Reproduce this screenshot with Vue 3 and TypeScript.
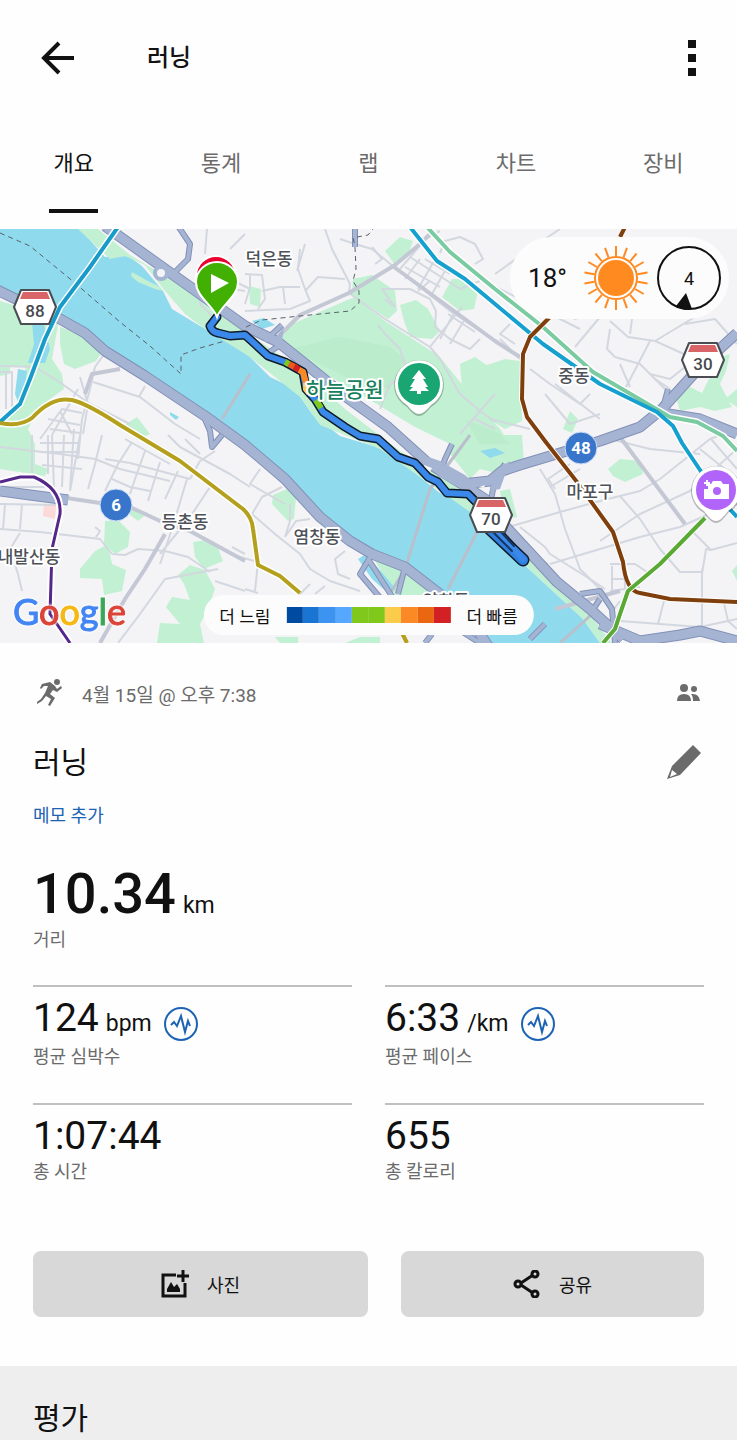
<script setup lang="ts">
import { ref } from 'vue'

interface Metric {
  value: string
  unit?: string
  label: string
  pulse?: boolean
}
interface Spot {
  x: number
  y: number
  text: string
}

const tabs: string[] = ['개요', '통계', '랩', '차트', '장비']
const activeTab = ref(0)

const metrics: Metric[] = [
  { value: '124', unit: 'bpm', label: '평균 심박수', pulse: true },
  { value: '6:33', unit: '/km', label: '평균 페이스', pulse: true },
  { value: '1:07:44', label: '총 시간' },
  { value: '655', label: '총 칼로리' },
]

const paceColors: string[] = [
  '#004b9f', '#1a75d2', '#3c94f0', '#55a7ff', '#80c91c',
  '#80c91c', '#fbcb4b', '#fb8a26', '#ea6610', '#d32024',
]

const sunRays: number[] = Array.from({ length: 18 }, (_, i) => i * 20)

/* Map geometry, in the units of the 737 x 414 map canvas */
const parks: string[] = [
  'M78 0H98L130 26L170 50L215 82L300 140L345 180L400 222L470 266L478 280L500 312L536 336L587 382L612 414H600L583 390L530 341L480 290L440 262L380 220L320 196L300 168L250 128L205 100L185 85L165 62L145 36L125 27L110 30Z',
  'M0 72L40 84L58 96L52 130L62 145L64 160L50 170L36 184L28 200L35 215V235L48 240L45 247L0 240V192L14 184L20 160L26 138H10V145L0 147Z',
  'M60 98L80 105L104 120L96 132L75 140L64 135L60 115Z',
  'M278 104L290 96L345 72L355 68L385 92L425 118L440 128L480 178L500 200L510 215H450L415 198L360 165L300 130Z',
  'M353 50L372 46L395 62L397 82L388 90L352 66Z',
  'M385 22L400 8L413 12L408 26L395 36Z',
  'M400 76L416 71L428 80L440 102L432 110L410 108L404 92Z',
  'M452 50L464 50L478 62L474 80L460 82L442 68Z',
  'M520 132L505 130L490 135L470 142L458 160L480 185L505 200L522 192Z',
  'M450 206H522L524 234L500 245L480 240L470 250L450 225Z',
  'M249 57L261 60L260 78L250 75Z',
  'M105 292L118 291L130 303L128 318L115 325L104 315Z',
  'M80 340L95 322L108 315L112 335L126 341L122 362L104 366L102 350L80 349Z',
  'M122 276L148 284L138 292L130 286Z',
  'M193 313L206 311L218 319L223 332L204 340L195 328Z',
  'M190 336L205 341L215 360L208 380L200 395L204 414H157L160 394L180 395L166 378L172 368L190 371L184 355L178 346Z',
  'M123 197L137 188L150 205L137 211Z',
  'M273 266L287 260L296 268L294 290L288 292L272 275Z',
  'M608 240L620 230L640 232L643 245L625 253L613 247Z',
  'M500 262L510 260L517 288L505 290Z',
  'M676 168L690 158L702 164L709 150L720 145L715 130L730 125L726 142L720 155L732 178L715 182L700 178L680 182Z',
  'M563 200L570 182L578 190L572 204Z',
  'M737 160L725 170L737 178Z',
  'M732 342L737 336V352Z',
  'M375 332L395 336L430 360L430 366H395Z',
  'M275 408L298 408V414H280ZM345 414L360 408L380 408V414Z',
  'M460 135L475 128L495 142L485 165L462 160Z',
]

const ponds: string[] = [
  'M32 94L44 96L50 120L45 134L28 134L34 115Z',
  'M18 140L27 142L24 165L20 178L15 165Z',
  'M252 92L264 89L275 96L262 100Z',
  'M170 183L179 188L176 191L170 186Z',
  'M480 222L495 219L505 224L490 229Z',
  'M358 330L366 325L396 360L388 364L372 350Z',
]

const minorRoads: string[] = [
  'M0 137L35 138L58 152L90 175L130 195',
  'M0 143H12V185M6 143V180',
  'M93 153L140 168L175 195L200 210',
  'M105 124L95 138L90 160L82 190L78 230M80 148L88 175L83 205',
  'M145 157L139 168M185 210L200 225',
  'M0 218L60 225L95 230L120 240L170 252',
  'M32 206V245M48 206V245M52 206L54 260M64 206L62 258M74 200L70 260M80 206L70 262',
  'M40 214H80M40 223H80M42 236L82 240M50 200L80 204M40 210L62 180L82 184M48 190L80 196',
  'M102 206L95 235L88 260M132 213L118 235L105 262M145 222L135 250L130 265',
  'M105 230L130 234L160 242L190 250M112 250L130 258L150 262M160 233L148 272M178 242L165 270M125 210L170 235',
  'M0 258H50M0 275L60 276M5 276L3 300M22 275L20 300M0 300L40 303L100 310L112 325L125 326L138 320L165 322L188 328L210 343',
  'M20 304L10 320L18 345L22 362M95 298L100 302L96 308',
  'M187 250L178 280L172 300L160 335M210 258L190 288L160 325M215 222L200 232L190 250M218 340L165 350L140 385L118 414',
  'M215 352L245 362M232 318L245 325M168 206L180 218L230 245L250 258',
  'M260 240L250 255L285 275M282 258L262 268L252 285L275 305L300 325L310 340L330 352L360 362',
  'M290 275V292L285 308M285 308L296 292L310 290M345 322L335 330L338 345L350 350M310 355L300 365M325 357L315 365M230 325L258 333L255 362M245 360L258 364',
  'M340 10L355 15L372 20L394 38M325 0L332 20L350 55L349 64M394 38L420 58L450 82L495 112',
  'M372 18L382 30L375 35M400 40L412 26L425 10L440 2',
  'M440 24L445 12L460 8L475 15L483 30L475 35M425 30L450 45M430 52L418 62M410 28L460 60L480 52',
  'M420 30L405 50M434 32L418 60M446 40L432 65M405 38L440 58',
  'M385 70L395 78L382 60L410 60L430 70L436 82L435 98M435 98L450 110L470 120L480 110M430 118L448 95L462 78M448 85L475 103M455 82L440 110M465 90L450 115',
  'M349 64L385 90L430 118L440 130L460 165L480 182L495 193M378 96L385 105L400 120L405 135L400 150L390 155L380 180',
  'M495 165L460 205M475 190L495 200',
  'M250 45V58L245 75M245 45L262 46L265 70L258 80M262 62L280 58L300 58M283 58L285 75M300 20L298 40L305 60L310 72L290 80L245 82M305 62L318 48L345 50',
  'M305 15L297 42M230 50L250 60M205 25L207 0M220 58L245 62M200 50V75L215 90',
  'M490 55L540 80L580 100M495 45L530 20L560 0M555 70L575 90L610 75L650 85',
  'M575 118L600 88M610 92L628 108L655 112L700 85M650 112L625 160M610 100L607 120L615 128L640 135L665 160M685 95L715 90L737 115M632 90L630 105',
  'M655 112L695 130L670 150L650 145M620 135L630 158M500 110L520 130M510 95L500 105L515 115M530 140L550 155L580 175L590 165M545 165L570 195L600 185M555 155L600 190M490 190L530 200',
  'M705 120L690 145M670 160L655 150',
  'M540 240L555 265L565 300L580 340L605 365M512 297L560 283L600 272L640 262L660 250L710 210L737 200',
  'M550 335L600 320L640 308L680 298L720 280L737 275M600 312L640 285L690 262L737 220',
  'M620 267L640 290L660 320L680 343H702M702 345L706 320L711 321L690 300M711 321L737 314M702 340V400M711 210L737 240M700 220L737 250',
  'M550 258L580 240M555 260L548 250L570 235M520 298L545 318L550 325L590 350L605 360M520 320L548 335M610 335H635L650 345M612 337V362M625 335V360M612 350H630M610 362L640 358',
  'M620 392L700 398L737 390M665 368L658 395M620 372L610 385M723 370L728 392L737 400M610 210L650 220L700 225',
  'M52 206L78 160M60 182L72 205M230 20L245 5',
]

const mainRoads: string[] = [
  'M0 265L60 268L100 274L130 278L160 292L190 302L245 332',
  'M165 305L145 340L125 370L100 414',
  'M349 64L395 36L420 15L430 5M349 64L300 86L278 108',
  'M394 38L495 112L520 128',
  'M620 208L685 295M555 380L620 362M120 140L92 145L85 165',
]

const bridges: string[] = [
  'M250 145L222 190',
  'M470 206L430 260L405 340L390 365',
  'M477 303L448 360',
  'M590 387L560 414',
]

const highways: string[] = [
  'M-5 60L20 72L60 90L85 104L105 122L145 147L205 187L245 216L285 250L320 288L350 312L372 325L405 338L440 365L470 390L490 420',
  'M105 -3L165 40L210 72L245 97L278 113L308 137L345 167L388 198L428 234L462 255L485 270L507 299L557 353L590 380L623 410',
  'M462 255L490 252L502 242L520 236L560 224L600 212L640 198L662 180L700 138L737 104',
  'M662 184L700 190L737 205',
  'M0 262L30 266L68 271',
  'M600 395L640 412L680 406L700 402L737 412',
]

const ramps: string[] = [
  'M178 -3L190 15L188 30L175 43',
  'M204 188L210 202L212 218L222 206M265 112L282 96M268 124L280 116',
  'M372 325L360 345L388 378M368 330L395 372M405 338L398 365',
  'M490 276L495 250L505 235M440 245L445 230L452 215',
  'M590 385L600 370M580 365L600 362L612 380L615 414M355 0L355 18',
  'M530 410L545 395M425 414L432 405M450 395L480 414M660 190L668 160',
]

const routePath =
  'M217 88L210 97Q212 103 218 104L230 107L245 106L255 115L268 127L285 133L303 143L306 160L315 170L323 183L345 198L360 207L378 210L398 228L415 234L428 248L438 253L447 264L468 265L479 276L500 305L523 330'

const placeNames: Spot[] = [
  { x: 269, y: 36, text: '덕은동' },
  { x: 574, y: 153, text: '중동' },
  { x: 590, y: 269, text: '마포구' },
  { x: 185, y: 299, text: '등촌동' },
  { x: 317, y: 314, text: '염창동' },
  { x: 29, y: 334, text: '내발산동' },
  { x: 446, y: 378, text: '양화동' },
]

const shields: Spot[] = [
  { x: 35, y: 78, text: '88' },
  { x: 703, y: 131, text: '30' },
  { x: 491, y: 286, text: '70' },
]

const routeDots: Spot[] = [
  { x: 116, y: 276, text: '6' },
  { x: 581, y: 219, text: '48' },
]

const googleLetters = [
  { ch: 'G', color: '#4285f4' },
  { ch: 'o', color: '#dc4437' },
  { ch: 'o', color: '#f4b915' },
  { ch: 'g', color: '#4285f4' },
  { ch: 'l', color: '#3aa757' },
  { ch: 'e', color: '#dc4437' },
]
</script>

<template>
  <div class="page">
    <header class="topbar">
      <button class="icon-btn" type="button" aria-label="뒤로">
        <svg width="34" height="34" viewBox="0 0 34 34" fill="none" stroke="#111" stroke-width="4">
          <path d="M33 17H4M18 2L3 17L18 32" />
        </svg>
      </button>
      <h1 class="topbar-title">러닝</h1>
      <button class="icon-btn" type="button" aria-label="더보기">
        <svg width="34" height="38" viewBox="0 0 34 38" fill="#111">
          <path d="M13 1h8v8h-8zM13 15h8v8h-8zM13 29h8v8h-8z" />
        </svg>
      </button>
    </header>

    <nav class="tabs" role="tablist">
      <button
        v-for="(tab, i) in tabs"
        :key="tab"
        type="button"
        role="tab"
        class="tab"
        :class="{ active: i === activeTab }"
        :aria-selected="i === activeTab"
        @click="activeTab = i"
      >
        <span class="tab-text">{{ tab }}</span>
      </button>
    </nav>

    <section class="map">
      <svg class="map-canvas" viewBox="0 0 737 414">
        <rect width="737" height="414" fill="#f4f4f6" />
        <path d="M0 0H80L105 28L128 27L142 37L163 62L172 80L200 97L240 118L270 148L295 160L312 185L340 207L380 219L410 240L440 264L478 278L500 312L530 341L583 390L600 414H490L440 370L400 338L350 315L320 288L290 258L250 222L205 187L145 147L105 122L85 104L0 58Z" fill="#8fdaed" />
        <path v-for="d in parks" :key="d" :d="d" fill="#c2f0d2" />
        <path d="M132 43L146 51L160 58L163 62L155 60L138 53L131 47Z" fill="#c2f0d2" />
        <path d="M44 276L56 275L55 290L43 287Z" fill="#fbdad8" />
        <path d="M290 120L340 108L390 118L405 130L390 160L350 150ZM465 190L500 205L510 215H480Z" fill="#b6eac8" opacity="0.6" />
        <path v-for="d in ponds" :key="d" :d="d" fill="#8fdaed" />
        <g fill="none" stroke="#d3d7df" stroke-width="2" stroke-linejoin="round">
          <path v-for="d in minorRoads" :key="d" :d="d" />
        </g>
        <g fill="none" stroke="#c3c8d4" stroke-width="4" stroke-linejoin="round">
          <path v-for="d in mainRoads" :key="d" :d="d" />
        </g>
        <g fill="none" stroke="#b9c0cc" stroke-width="3">
          <path v-for="d in bridges" :key="d" :d="d" />
        </g>
        <g fill="none" stroke-linejoin="round">
          <g stroke="#8290b7" stroke-width="6"><path v-for="d in ramps" :key="d" :d="d" /></g>
          <g stroke="#8290b7" stroke-width="11"><path v-for="d in highways" :key="d" :d="d" /></g>
          <g stroke="#a5b4d3" stroke-width="4"><path v-for="d in ramps" :key="d" :d="d" /></g>
          <g stroke="#a5b4d3" stroke-width="9"><path v-for="d in highways" :key="d" :d="d" /></g>
        </g>
        <path d="M275 110L284 98L282 112L300 128ZM420 225L440 232L465 246L478 258L465 262L440 248ZM490 262L495 242L510 232L500 260Z" fill="#a5b4d3" />
        <circle cx="161" cy="44" r="6" fill="#f4f4f6" stroke="#a5b4d3" stroke-width="4" />
        <path d="M424 236L432 239L430 243L424 240ZM479 258L485 256L484 259Z" fill="#f4f4f6" />
        <g fill="none" stroke="#59626b" stroke-width="1" stroke-dasharray="5 4">
          <path d="M0 4L30 17L75 54L120 93L150 117L181 145V126L200 119L225 112" />
          <path d="M246 98L262 91L300 87L350 82L359 74V62L353 52L356 40L355 18L353 8M357 8L368 6L373 0" />
        </g>

        <g fill="none" stroke-linejoin="round">
          <g stroke="#fff" stroke-width="7">
            <path d="M118 -2L90 38L60 78L45 110L30 150L20 175L0 193" />
            <path d="M0 194Q20 198 32 189Q52 167 72 171Q88 175 120 196L180 232L243 280Q252 288 253 300L258 336L280 347L300 364" />
            <path d="M0 253L20 248H34Q62 260 60 285L52 320L50 385L70 414" />
            <path d="M410 -2L437 32L465 50L495 75L543 115L600 155L657 183L673 197L682 214L700 241L725 275L737 288" />
            <path d="M427 -2L450 23L495 60L543 98L593 143L670 188L697 193L723 207L737 222" />
          </g>
          <g stroke-width="4">
            <path stroke="#189bc9" d="M118 -2L90 38L60 78L45 110L30 150L20 175L0 193" />
            <path stroke="#b4a01c" d="M0 194Q20 198 32 189Q52 167 72 171Q88 175 120 196L180 232L243 280Q252 288 253 300L258 336L280 347L300 364" />
            <path stroke="#b4a01c" d="M402 404L407 414" />
            <path stroke="#56278a" stroke-width="3" d="M0 253L20 248H34Q62 260 60 285L52 320L50 385L70 414" />
            <path stroke="#7acba1" d="M427 -2L450 23L495 60L543 98L593 143L670 188L697 193L723 207L737 222" />
            <path stroke="#16a0cf" d="M410 -2L437 32L465 50L495 75L543 115L600 155L657 183L673 197L682 214L700 241L725 275L737 288" />
          </g>
          <path stroke="#fff" stroke-width="6" d="M550 88L530 108L523 125L522 170L527 188L545 212L577 253L613 303L623 333L630 358L640 364L670 370L737 373" />
          <path stroke="#7f3f0d" stroke-width="4" d="M625 -2L620 8M550 88L530 108L523 125L522 170L527 188L545 212L577 253L613 303L623 333Q626 362 640 364L670 370L737 373" />
          <path stroke="#fff" stroke-width="6" d="M603 414L615 400L620 385L628 362L660 335L705 289" />
          <path stroke="#5aa935" stroke-width="4" d="M603 414L615 400L620 385L628 362L660 335L705 289" />
        </g>

        <g fill="none" stroke-linejoin="round" stroke-linecap="round">
          <path :d="routePath" stroke="#101b28" stroke-width="9" />
          <path d="M488 298L523 331" stroke="#101b28" stroke-width="13" />
          <path d="M488 298L523 331" stroke="#2f7fe0" stroke-width="10" />
          <path :d="routePath" stroke="#3a88ea" stroke-width="6" />
          <path d="M490 300L512 322M500 302L514 317" stroke="#17365e" stroke-width="2" />
          <g stroke-width="6" stroke-linecap="butt">
            <path d="M285 133L289 135" stroke="#80c91c" />
            <path d="M289 135L297 139" stroke="#ea5a18" />
            <path d="M294 138L300 141" stroke="#d32024" />
            <path d="M299 141L303 143L306 154" stroke="#fb8a26" />
            <path d="M306 154V160L309 164" stroke="#fbcb4b" />
            <path d="M316 171L321 179" stroke="#80c91c" />
          </g>
        </g>

        <g class="place">
          <text v-for="p in placeNames" :key="p.text" :x="p.x" :y="p.y">{{ p.text }}</text>
        </g>
        <text class="park-name" x="345" y="168">하늘공원</text>

        <g v-for="s in shields" :key="s.text" :transform="`translate(${s.x} ${s.y})`">
          <path d="M-21 0L-14 -17H14L21 0L14 17H-14Z" fill="#fff" stroke="#4a4d52" stroke-width="2" stroke-linejoin="round" />
          <path d="M-12 -15H12L15 -8H-15Z" fill="#d96467" />
          <text class="shield-text" y="10">{{ s.text }}</text>
        </g>
        <g v-for="s in routeDots" :key="s.text" :transform="`translate(${s.x} ${s.y})`">
          <circle r="16" fill="#3976cb" stroke="#cfe0f8" stroke-width="1" />
          <text class="dot-text" y="6">{{ s.text }}</text>
        </g>

        <g transform="translate(419 155)">
          <path d="M0 32Q-5 32 -12 23A25 25 0 1 1 12 23Q5 32 0 32Z" fill="#000" opacity="0.25" />
          <path d="M0 30Q-5 30 -12 21A24 24 0 1 1 12 21Q5 30 0 30Z" fill="#fff" />
          <circle r="21" fill="#1aa673" />
          <path d="M0 -14L7 -5H4L9 3H6L10 7H2V10H-2V7H-10L-6 3H-9L-4 -5H-7Z" fill="#fff" />
        </g>
        <g transform="translate(716 261)">
          <path d="M0 33Q-5 33 -12 23A25 25 0 1 1 12 23Q5 33 0 33Z" fill="#000" opacity="0.25" />
          <path d="M0 31Q-5 31 -12 21A24 24 0 1 1 12 21Q5 31 0 31Z" fill="#fff" />
          <circle r="20" fill="#b164fa" />
          <path d="M-12 -1H-8V-6H-5L-3 -9H5L7 -6H13V9H-12Z" fill="#fff" />
          <path d="M-12 -7H-6M-9 -10V-4" stroke="#fff" stroke-width="2" />
          <circle cx="1" cy="1" r="4" fill="#b164fa" />
        </g>

        <circle cx="216" cy="47" r="20" fill="#e9002f" stroke="#fff" stroke-width="2" />
        <path d="M217 88C213 76 196 68 196 53A21 20 0 0 1 238 53C238 68 221 76 217 88Z" fill="#42b003" stroke="#fff" stroke-width="2" />
        <path d="M211 45L229 54L211 64Z" fill="#fff" />
      </svg>

      <div class="weather">
        <span class="temp">18°</span>
        <svg width="64" height="64" viewBox="-32 -32 64 64">
          <circle r="18" fill="#ff8a20" />
          <circle r="21" fill="none" stroke="#ff8a20" stroke-width="2" />
          <g stroke="#ff8a20" stroke-width="2">
            <path v-for="a in sunRays" :key="a" d="M0 -22V-32" :transform="`rotate(${a})`" />
          </g>
        </svg>
        <svg width="64" height="64" viewBox="-32 -32 64 64">
          <circle r="31" fill="none" stroke="#111" stroke-width="2" />
          <path d="M-3 15L-13 28L-4 32L3 31Z" fill="#111" />
          <text class="wind" y="7">4</text>
        </svg>
      </div>

      <div class="legend">
        <span>더 느림</span>
        <div class="pace-bar">
          <i v-for="(c, i) in paceColors" :key="i" :style="{ background: c }"></i>
        </div>
        <span>더 빠름</span>
      </div>

      <a class="google" href="#" aria-label="Google">
        <span v-for="(l, i) in googleLetters" :key="i" :style="{ color: l.color }">{{ l.ch }}</span>
      </a>
    </section>

    <main class="summary">
      <div class="meta">
        <svg width="32" height="32" viewBox="0 0 32 32" fill="#6b6b6b">
          <circle cx="24" cy="5" r="3" />
          <path d="M9 7L17 5L22 9L24 12L28 9L29 11L24 15L20 13L17 17L22 21L17 29L15 28L18 22L13 19L9 24L4 27L4 25L8 22L12 16L15 9L11 9L8 12L7 11Z" />
        </svg>
        <time class="when">4월 15일 @ 오후 7:38</time>
        <svg width="26" height="20" viewBox="0 0 26 20" fill="#6b6b6b">
          <circle cx="9" cy="5" r="4" />
          <circle cx="19" cy="6" r="3" />
          <path d="M2 18Q2 11 9 11Q16 11 16 18ZM16 11Q24 10 25 18H18Q18 13 16 11Z" />
        </svg>
      </div>

      <div class="name-row">
        <h2 class="name">러닝</h2>
        <button class="icon-btn" type="button" aria-label="수정">
          <svg width="36" height="36" viewBox="0 0 36 36" fill="#6b6b6b">
            <path d="M27 0L35 8L14 30L1 34L6 21ZM6 25L4 32L11 29Z" fill-rule="evenodd" />
          </svg>
        </button>
      </div>
      <a class="memo" href="#">메모 추가</a>

      <div class="distance"><strong>10.34</strong><span class="unit">km</span></div>
      <div class="label">거리</div>

      <dl class="metrics">
        <div v-for="m in metrics" :key="m.label" class="metric">
          <dd class="value" :class="{ 'with-icon': m.pulse }">
            <span>{{ m.value }}</span>
            <span v-if="m.unit" class="unit">{{ m.unit }}</span>
            <svg v-if="m.pulse" class="pulse" width="34" height="34" viewBox="0 0 34 34" fill="none" stroke="#1c63b4">
              <circle cx="17" cy="17" r="16" stroke-width="2" />
              <path d="M7 18L10 15L13 19L17 9L21 25L24 14L26 19" stroke-width="2" />
            </svg>
          </dd>
          <dt class="label">{{ m.label }}</dt>
        </div>
      </dl>

      <div class="actions">
        <button type="button" class="action">
          <svg width="28" height="28" viewBox="0 0 28 28" fill="none" stroke="#111" stroke-width="3">
            <path d="M15 5H2V26H24V13M22 0V12M16 6H28" />
            <path d="M6 22V19L10 12L13 17L16 14L19 19V22Z" fill="#111" stroke="none" />
          </svg>
          <span>사진</span>
        </button>
        <button type="button" class="action">
          <svg width="28" height="28" viewBox="0 0 28 28" fill="none" stroke="#111" stroke-width="3">
            <path d="M8 13L20 5M8 15L20 23" />
            <circle cx="5" cy="14" r="3" />
            <circle cx="22" cy="4" r="3" />
            <circle cx="22" cy="24" r="3" />
          </svg>
          <span>공유</span>
        </button>
      </div>
    </main>

    <section class="rating">
      <h2 class="name">평가</h2>
    </section>
  </div>
</template>

<style>
body {
  margin: 0;
  background: #fefefe;
}
</style>

<style scoped>
.page {
  font-family: Roboto, 'Noto Sans CJK KR', sans-serif;
  color: #111;
}
button {
  font: inherit;
  color: inherit;
  border: 0;
  padding: 0;
  background: none;
  cursor: pointer;
}
svg {
  display: block;
  flex: none;
}
h1, h2, dl, dd {
  margin: 0;
}
.topbar {
  display: flex;
  align-items: center;
  height: 115px;
  padding: 0 28px 0 41px;
}
.topbar-title {
  flex: 1;
  margin-left: 72px;
  font-size: 24px;
  font-weight: 500;
  line-height: 32px;
}
.tabs {
  display: grid;
  grid-template-columns: repeat(5, 1fr);
  padding-bottom: 16px;
}
.tab {
  display: flex;
  justify-content: center;
  color: #6b6b6b;
  font-size: 22px;
  line-height: 90px;
}
.tab-text {
  min-width: 49px;
  border: solid transparent;
  border-width: 4px 0;
}
.active {
  color: #111;
}
.active .tab-text {
  border-bottom-color: #111;
}
.map {
  position: relative;
  overflow: hidden;
}
.map-canvas {
  width: 100%;
}
.map-canvas text {
  text-anchor: middle;
}
.place text {
  font-size: 17px;
  font-weight: 500;
  fill: #4e5258;
  stroke: #fff;
  stroke-width: 4px;
  stroke-linejoin: round;
  paint-order: stroke;
}
.park-name {
  font-size: 21px;
  font-weight: 500;
  fill: #16815c;
  stroke: #fff;
  stroke-width: 4px;
  stroke-linejoin: round;
  paint-order: stroke;
}
.shield-text {
  font-size: 17px;
  font-weight: 500;
  fill: #474a4f;
}
.dot-text {
  font-size: 17px;
  font-weight: 700;
  fill: #fff;
}
.weather {
  position: absolute;
  top: 8px;
  right: 8px;
  display: flex;
  align-items: center;
  gap: 9px;
  height: 82px;
  padding: 0 8px 0 18px;
  border-radius: 41px;
  background: #fcfcfc;
}
.temp {
  margin-right: 8px;
  font-size: 26px;
}
.wind {
  font-size: 18px;
  fill: #111;
  text-anchor: middle;
}
.legend {
  position: absolute;
  left: 50%;
  bottom: 8px;
  transform: translateX(-50%);
  display: flex;
  align-items: center;
  gap: 16px;
  height: 40px;
  padding: 0 16px;
  border-radius: 20px;
  background: #fcfcfc;
  font-size: 17px;
  white-space: nowrap;
}
.pace-bar {
  display: flex;
  width: 164px;
  height: 16px;
}
.pace-bar i {
  flex: 1;
}
.google {
  position: absolute;
  left: 13px;
  bottom: 12px;
  font-family: Lato, Roboto, sans-serif;
  font-size: 36px;
  line-height: 40px;
  text-decoration: none;
  -webkit-text-stroke: 1px currentColor;
  filter: drop-shadow(0 0 1px #fff) drop-shadow(0 0 1px #fff);
}
.google span {
  -webkit-text-stroke-color: currentColor;
}
.summary {
  padding: 0 33px 49px;
}
.meta {
  display: flex;
  align-items: center;
  height: 100px;
}
.when {
  flex: 1;
  margin-left: 17px;
  color: #6b6b6b;
  font-size: 19px;
}
.meta svg:last-child {
  margin-right: 3px;
}
.name-row {
  display: flex;
  align-items: center;
  justify-content: space-between;
  height: 40px;
}
.name-row .icon-btn {
  margin-right: 2px;
}
.name {
  font-size: 30px;
  font-weight: 400;
  line-height: 42px;
}
.memo {
  display: block;
  width: fit-content;
  margin-top: 18px;
  color: #1c63b4;
  font-size: 18px;
  line-height: 30px;
  text-decoration: none;
}
.distance {
  display: flex;
  align-items: baseline;
  gap: 7px;
  height: 64px;
  margin-top: 31px;
  line-height: 64px;
}
.distance strong {
  font-size: 56px;
  font-weight: 500;
}
.unit {
  font-size: 23px;
}
.label {
  color: #6b6b6b;
  font-size: 18px;
  line-height: 28px;
}
.metrics {
  display: grid;
  grid-template-columns: 1fr 1fr;
  gap: 32px 33px;
  margin-top: 31px;
}
.metric {
  padding-top: 9px;
  border-top: 2px solid #c0c0c0;
}
.value {
  display: flex;
  align-items: baseline;
  gap: 7px;
  height: 44px;
  font-size: 39px;
  line-height: 44px;
}
.with-icon {
  height: 47px;
}
.pulse {
  align-self: flex-end;
  margin: 0 0 2px 5px;
}
.actions {
  display: grid;
  grid-template-columns: 335fr 303fr;
  gap: 33px;
  margin-top: 65px;
}
.action {
  display: flex;
  align-items: center;
  justify-content: center;
  gap: 18px;
  height: 66px;
  border-radius: 8px;
  background: #d8d8d8;
  font-size: 18px;
}
.rating {
  padding: 32px 33px 0;
  background: #eee;
}
</style>
